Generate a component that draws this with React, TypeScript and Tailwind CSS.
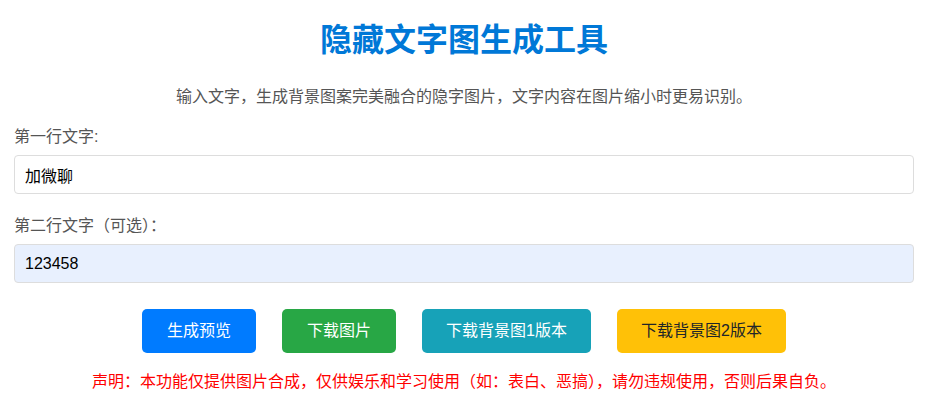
import React from 'react';

const font = { fontFamily: '"Liberation Sans", "Noto Sans CJK SC", sans-serif' };

export default function App() {
  const [line1, setLine1] = React.useState('加微聊');
  const [line2, setLine2] = React.useState('123458');

  return (
    <div className="min-h-screen bg-white font-['Liberation_Sans','Noto_Sans_CJK_SC',sans-serif]">
      <div className="mx-auto w-[900px] -translate-x-px pt-[18px]">
        <h1 className="text-center text-[32px] font-bold leading-[44px] text-[#0078d7]">隐藏文字图生成工具</h1>
        <p className="mt-[23px] text-center text-[16px] leading-[24px] text-[#555]">
          输入文字，生成背景图案完美融合的隐字图片，文字内容在图片缩小时更易识别。
        </p>

        <div className="mt-[16px]">
          <label className="block text-[16px] leading-[24px] text-[#555]">第一行文字:</label>
          <input
            value={line1}
            onChange={(e) => setLine1(e.target.value)}
            className="mt-[6px] block h-[39px] w-full rounded border border-[#ddd] bg-white px-[10px] text-[16px] text-black outline-none"
          />
        </div>

        <div className="mt-[20px]">
          <label className="block text-[16px] leading-[24px] text-[#555]">第二行文字（可选）：</label>
          <input
            value={line2}
            onChange={(e) => setLine2(e.target.value)}
            className="mt-[6px] block h-[39px] w-full rounded border border-[#ddd] bg-[#e8f0fe] px-[10px] text-[16px] text-black outline-none"
          />
        </div>

        <div className="mt-[26px] flex justify-center gap-[26px]">
          <button className="h-[44px] rounded-[5px] bg-[#007bff] px-[25px] text-[16px] text-white">生成预览</button>
          <button className="h-[44px] rounded-[5px] bg-[#28a745] px-[25px] text-[16px] text-white">下载图片</button>
          <button className="h-[44px] rounded-[5px] bg-[#17a2b8] px-[24px] text-[16px] text-white">下载背景图1版本</button>
          <button className="h-[44px] rounded-[5px] bg-[#ffc107] px-[24px] text-[16px] text-[#212529]">下载背景图2版本</button>
        </div>

        <p className="mt-[17px] text-center text-[16px] leading-[24px] text-[#ff0000]" style={font}>
          声明：本功能仅提供图片合成，仅供娱乐和学习使用（如：表白、恶搞），请勿违规使用，否则后果自负。
        </p>
      </div>
    </div>
  );
}
